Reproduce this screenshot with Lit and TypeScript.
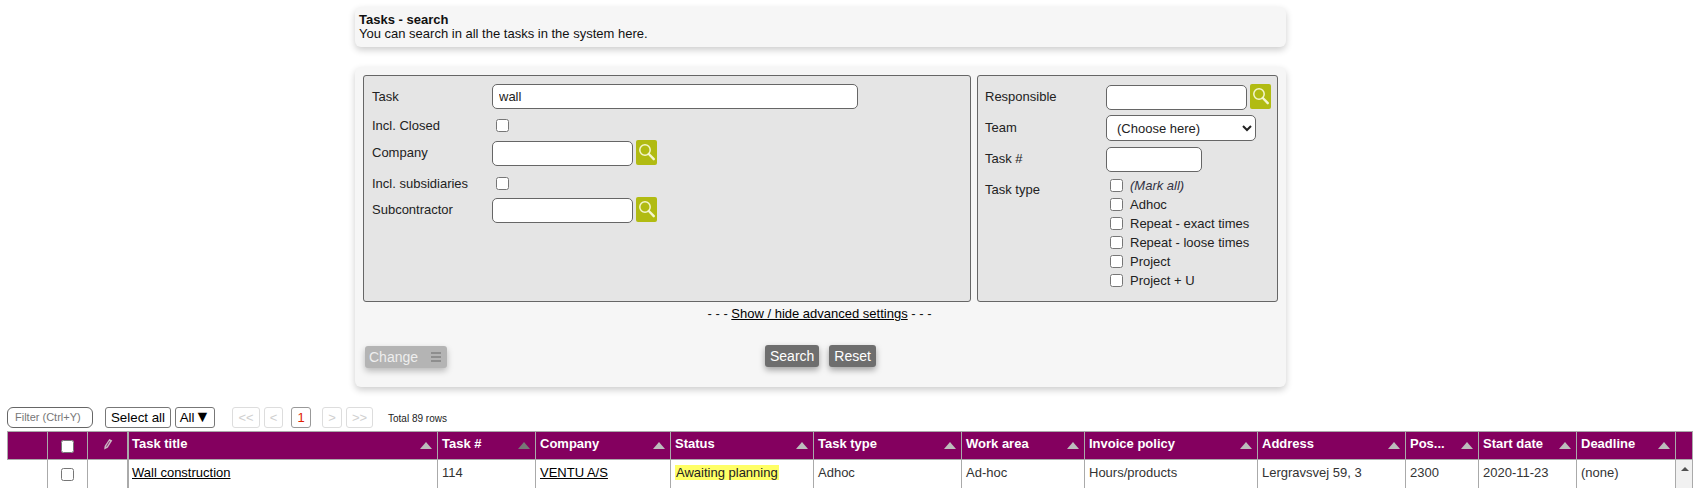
import { LitElement, html, css, svg } from "lit";
import { customElement } from "lit/decorators.js";

const lens = html`<button class="lens" aria-label="Search"><svg width="21" height="25" viewBox="0 0 21 25"><g fill="none" stroke="#f4f6cf"><circle cx="9" cy="10" r="5.2" stroke-width="1.5"/><path d="M12.8 14l5 5.2" stroke-width="2.4" stroke-linecap="round"/></g></svg></button>`;

const cols = [40, 40, 40, 310, 98, 135, 143, 148, 123, 173, 148, 73, 98, 99, 18];
const heads = [
  ["Task title", false], ["Task #", true], ["Company", false], ["Status", false], ["Task type", false],
  ["Work area", false], ["Invoice policy", false], ["Address", false], ["Pos...", false], ["Start date", false], ["Deadline", false],
] as const;

@customElement("app-root")
export class AppRoot extends LitElement {
  static styles = css`
    :host { display: block; height: 488px; overflow: hidden; background: #fff; font: 13px/15px "Liberation Sans", Arial, sans-serif; color: #222; }
    * { box-sizing: border-box; }
    .wrap { width: 931px; margin-left: 355px; padding-top: 7px; }
    .panel { background: #f6f6f6; border-radius: 6px; box-shadow: 0 3px 7px rgba(0,0,0,.2); }
    .intro { height: 40px; padding: 6px 4px; margin-bottom: 20px; color: #111; line-height: 14px; }
    .intro b { display: block; }
    .search { height: 320px; padding: 8px 8px 0; position: relative; }
    .fields { display: flex; gap: 6px; height: 227px; }
    fieldset { margin: 0; background: #e5e5e5; border: 1px solid #666; border-radius: 3px; display: grid; align-content: start; color: #222; padding: 8px 6px 0 8px; }
    .left { width: 609px; grid-template-columns: 120px 1fr; grid-template-rows: 29px 27px 31px 27px 30px; }
    .right { width: 300px; padding-left: 7px; grid-template-columns: 121px 1fr; grid-template-rows: 30px 32px 32px auto; }
    .lbl { height: 25px; line-height: 25px; }
    .lbl.up1 { line-height: 23px; }
    .right .lbl.low { line-height: 27px; }
    .right .lbl.up2 { line-height: 23px; }
    .row { display: flex; gap: 3px; align-items: flex-start; }
    .row.d1 { padding-top: 1px; }
    input[type="text"], select { height: 25px; border: 1px solid #666; border-radius: 5px; background: #fff; font: 13px "Liberation Sans", Arial, sans-serif; color: #222; padding: 0 6px; margin: 0; outline: none; }
    .task { width: 366px; }
    .mid { width: 141px; }
    .num { width: 96px; }
    select { width: 150px; height: 26px; padding: 0 6px; }
    .lens { width: 21px; height: 25px; border: 0; padding: 0; margin-top: -1px; background: #b1bb12; border-radius: 2px; display: block; }
    input[type="checkbox"] { width: 13px; height: 13px; margin: 0; display: block; }
    .chk { padding: 6px 0 0 4px; }
    .types { display: grid; grid-auto-rows: 19px; padding: 0 0 0 4px; margin-top: -2px; }
    .types label { display: flex; gap: 7px; align-items: center; height: 19px; line-height: 15px; }
    .types i { color: #334; }
    .adv { text-align: center; margin: 4px 0 0 -2px; line-height: 15px; color: #111; padding-top: 0; }
    .adv a, td a { color: #000; text-decoration: underline; }
    .actions { display: flex; margin-top: 24px; height: 24px; align-items: flex-start; }
    .change { width: 82px; height: 22px; margin: 1px 0 0 2px; background: #b4b4b4; color: #eee; border-radius: 3px; box-shadow: 0 3px 6px rgba(0,0,0,.25); font-size: 14px; line-height: 22px; padding-left: 4px; display: flex; justify-content: space-between; padding-right: 6px; align-items: center; }
    .change svg { display: block; }
    .btns { display: flex; gap: 10px; margin-left: 318px; }
    .btn { height: 22px; background: #6e6e6e; color: #fff; border-radius: 3px; border: 0; padding: 0 5px; font: 14px/22px "Liberation Sans", Arial, sans-serif; box-shadow: 0 3px 6px rgba(0,0,0,.35); }
    .tools { display: flex; align-items: center; height: 22px; margin: 19px 0 0 7px; }
    .filter { width: 86px; height: 21px; border: 1px solid #666; border-radius: 6px; color: #777; font-size: 11px; line-height: 19px; padding-left: 7px; margin-top: 1px; }
    .tb { height: 21px; border: 1px solid #777; border-radius: 3px; padding: 0 5px; background: #fff; font: 13.33px/19px "Liberation Sans", Arial, sans-serif; color: #000; }
    .sel { margin-left: 12px; width: 66px; padding: 0; }
    .all { margin-left: 4px; width: 40px; padding: 0 2px; white-space: nowrap; }
    .all span { font-size: 16px; line-height: 16px; }
    .pg { height: 21px; border: 1px solid #ddd; border-radius: 3px; color: #d0d0d0; font-size: 13px; line-height: 19px; text-align: center; background: #fff; }
    .pg.on { border-color: #999; color: #e02000; font-size: 13px; }
    .w28 { width: 28px; margin-left: 17px; }
    .w19 { width: 19px; margin-left: 4px; }
    .w20a { width: 20px; margin-left: 8px; }
    .w20b { width: 20px; margin-left: 11px; }
    .w27 { width: 27px; margin-left: 4px; }
    .total { font-size: 10px; margin-left: 15px; color: #222; padding-top: 2px; }
    table { border-collapse: separate; border-spacing: 0; table-layout: fixed; width: 1686px; margin: 3px 0 0 7px; }
    th { height: 29px; background: #84005f; color: #fff; font-size: 13px; font-weight: bold; text-align: left; padding: 0 4px; border-left: 1px solid #aaa; border-top: 1px solid #aaa; border-bottom: 1px solid #aaa; position: relative; white-space: nowrap; vertical-align: top; line-height: 24px; }
    th.last { border-right: 1px solid #aaa; }
    th.thick, td.thick { border-left-width: 2px; padding-left: 3px; }
    .arrow { position: absolute; right: 5px; top: 10px; width: 0; height: 0; border-left: 6px solid transparent; border-right: 6px solid transparent; border-bottom: 7px solid #bdbdbd; }
    .arrow.dim { border-bottom-color: #777; }
    th input[type="checkbox"] { margin: 8px auto 0; }
    th svg { display: block; margin: 6px auto 0; }
    td { height: 40px; padding: 5px 4px 0; border-left: 1px solid #aaa; vertical-align: top; white-space: nowrap; background: #fff; color: #333; }
    td:first-child { border-left: 0; }
    td input[type="checkbox"] { margin: 3px auto 0; }
    .hl { background: #ffff66; color: #222; display: inline-block; line-height: 15px; padding: 0 1px; }
    td.bar { background: #f1f1f1; border-right: 1px solid #aaa; padding: 0; position: relative; }
    .up { position: absolute; left: 5px; top: 7px; width: 0; height: 0; border-left: 4px solid transparent; border-right: 4px solid transparent; border-bottom: 4px solid #505050; }
  `;

  render() {
    return html`
      <div class="wrap">
        <div class="panel intro"><b>Tasks - search</b>You can search in all the tasks in the system here.</div>
        <div class="panel search">
          <div class="fields">
            <fieldset class="left">
              <div class="lbl">Task</div><div class="row"><input type="text" class="task" value="wall" /></div>
              <div class="lbl">Incl. Closed</div><div class="chk"><input type="checkbox" /></div>
              <div class="lbl">Company</div><div class="row d1"><input type="text" class="mid" />${lens}</div>
              <div class="lbl">Incl. subsidiaries</div><div class="chk"><input type="checkbox" /></div>
              <div class="lbl up1">Subcontractor</div><div class="row"><input type="text" class="mid" />${lens}</div>
            </fieldset>
            <fieldset class="right">
              <div class="lbl">Responsible</div><div class="row d1"><input type="text" class="mid" />${lens}</div>
              <div class="lbl low">Team</div><div class="row d1"><select><option>(Choose here)</option></select></div>
              <div class="lbl">Task #</div><div class="row d1"><input type="text" class="num" /></div>
              <div class="lbl up2">Task type</div>
              <div class="types">
                <label><input type="checkbox" /><i>(Mark all)</i></label>
                <label><input type="checkbox" />Adhoc</label>
                <label><input type="checkbox" />Repeat - exact times</label>
                <label><input type="checkbox" />Repeat - loose times</label>
                <label><input type="checkbox" />Project</label>
                <label><input type="checkbox" />Project + U</label>
              </div>
            </fieldset>
          </div>
          <div class="adv">- - - <a href="#">Show / hide advanced settings</a> - - -</div>
          <div class="actions">
            <div class="change">Change<svg width="10" height="10" viewBox="0 0 10 10" fill="#8e8e8e"><rect y="0" width="10" height="2"/><rect y="4" width="10" height="2"/><rect y="8" width="10" height="2"/></svg></div>
            <div class="btns"><button class="btn">Search</button><button class="btn">Reset</button></div>
          </div>
        </div>
      </div>
      <div class="tools">
        <div class="filter">Filter (Ctrl+Y)</div>
        <button class="tb sel">Select all</button>
        <button class="tb all">All<span>▼</span></button>
        <div class="pg w28">&lt;&lt;</div>
        <div class="pg w19">&lt;</div>
        <div class="pg on w20a">1</div>
        <div class="pg w20b">&gt;</div>
        <div class="pg w27">&gt;&gt;</div>
        <div class="total">Total 89 rows</div>
      </div>
      <table>
        <colgroup>${cols.map((w) => html`<col style="width:${w}px" />`)}</colgroup>
        <thead><tr>
          <th></th>
          <th><input type="checkbox" /></th>
          <th><svg width="10" height="12" viewBox="0 0 10 12">${svg`<path d="M6.3 1l3 1.6-4.6 7.2L1.2 11.5l.4-3.6z" fill="#c9b8c3"/><path d="M6.6 3.2L3.4 8.6" stroke="#84005f" stroke-width=".8"/>`}</svg></th>
          ${heads.map(([t, dim], i) => html`<th class=${i === 0 ? "thick" : ""}>${t}<span class="arrow ${dim ? "dim" : ""}"></span></th>`)}
          <th class="last"></th>
        </tr></thead>
        <tbody><tr>
          <td></td><td><input type="checkbox" /></td><td></td>
          <td class="thick"><a href="#">Wall construction</a></td>
          <td>114</td>
          <td><a href="#">VENTU A/S</a></td>
          <td><span class="hl">Awaiting planning</span></td>
          <td>Adhoc</td><td>Ad-hoc</td><td>Hours/products</td><td>Lergravsvej 59, 3</td><td>2300</td><td>2020-11-23</td><td>(none)</td>
          <td class="bar"><span class="up"></span></td>
        </tr></tbody>
      </table>
    `;
  }
}
